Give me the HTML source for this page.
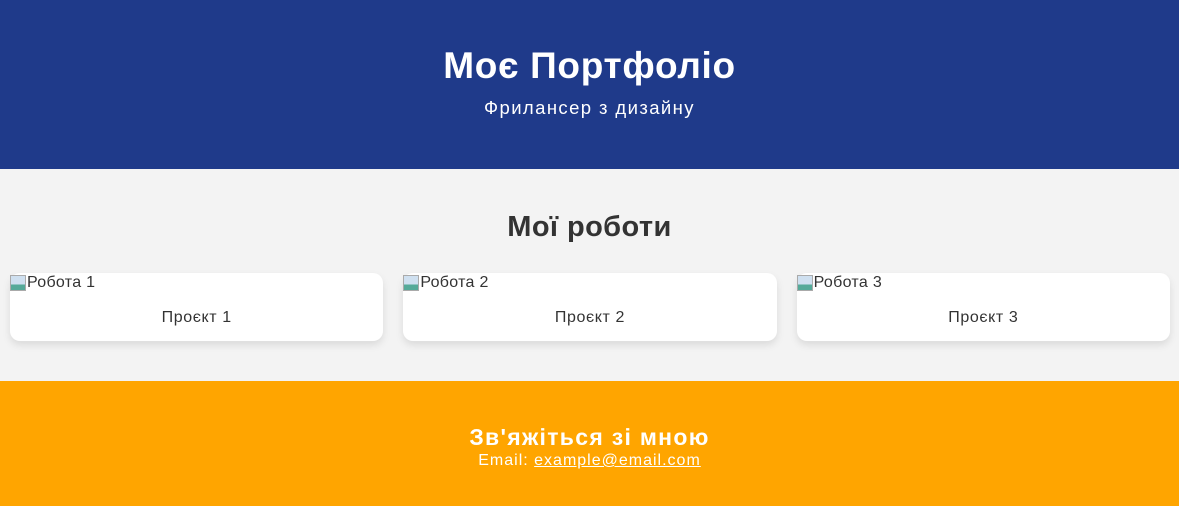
<!DOCTYPE html>
<html><head><meta charset="utf-8"><style>
*{margin:0;padding:0;box-sizing:border-box}
body{width:1179px;height:506px;overflow:hidden;font-family:"Liberation Sans",sans-serif;background:#f3f3f3}
header{background:#1f3a8a;height:169px;color:#fff;text-align:center;padding-top:44px}
header h1{font-size:37px;font-weight:bold;line-height:44px;letter-spacing:0.7px}
header p{font-size:18.5px;margin-top:9px;line-height:22px;letter-spacing:1.4px}
main{height:212px;text-align:center;padding-top:40px}
main h2{font-size:29px;color:#333;line-height:36px;letter-spacing:0.4px}
.cards{display:flex;gap:20px;padding:0 9px 0 10px;margin-top:28px}
.card{flex:1;background:#fff;border-radius:10px;height:68px;box-shadow:0 4px 8px rgba(0,0,0,0.1);text-align:left;position:relative}
.alt{font-size:16px;color:#333;position:absolute;left:0;top:0;line-height:20px;display:flex;align-items:center;letter-spacing:0.3px}
.ico{display:inline-block;width:16px;height:16px;border:1px solid #aaa;background:linear-gradient(#cfe0f0 60%,#5a9 60%);margin-right:1px}
.card p{position:absolute;top:36px;width:100%;text-align:center;font-size:16px;color:#333;letter-spacing:0.6px}
footer{background:#ffa500;height:125px;text-align:center;color:#fff;padding-top:42px}
footer h3{font-size:23px;line-height:28px;letter-spacing:1.3px}
footer p{font-size:16px;line-height:20px;letter-spacing:1px}
footer a{color:#fff}
</style></head><body>
<header><h1>Моє Портфоліо</h1><p>Фрилансер з дизайну</p></header>
<main><h2>Мої роботи</h2>
<div class="cards">
<div class="card"><span class="alt"><span class="ico"></span>Робота 1</span><p>Проєкт 1</p></div>
<div class="card"><span class="alt"><span class="ico"></span>Робота 2</span><p>Проєкт 2</p></div>
<div class="card"><span class="alt"><span class="ico"></span>Робота 3</span><p>Проєкт 3</p></div>
</div></main>
<footer><h3>Зв'яжіться зі мною</h3><p>Email: <a href="#">example@email.com</a></p></footer>
</body></html>
